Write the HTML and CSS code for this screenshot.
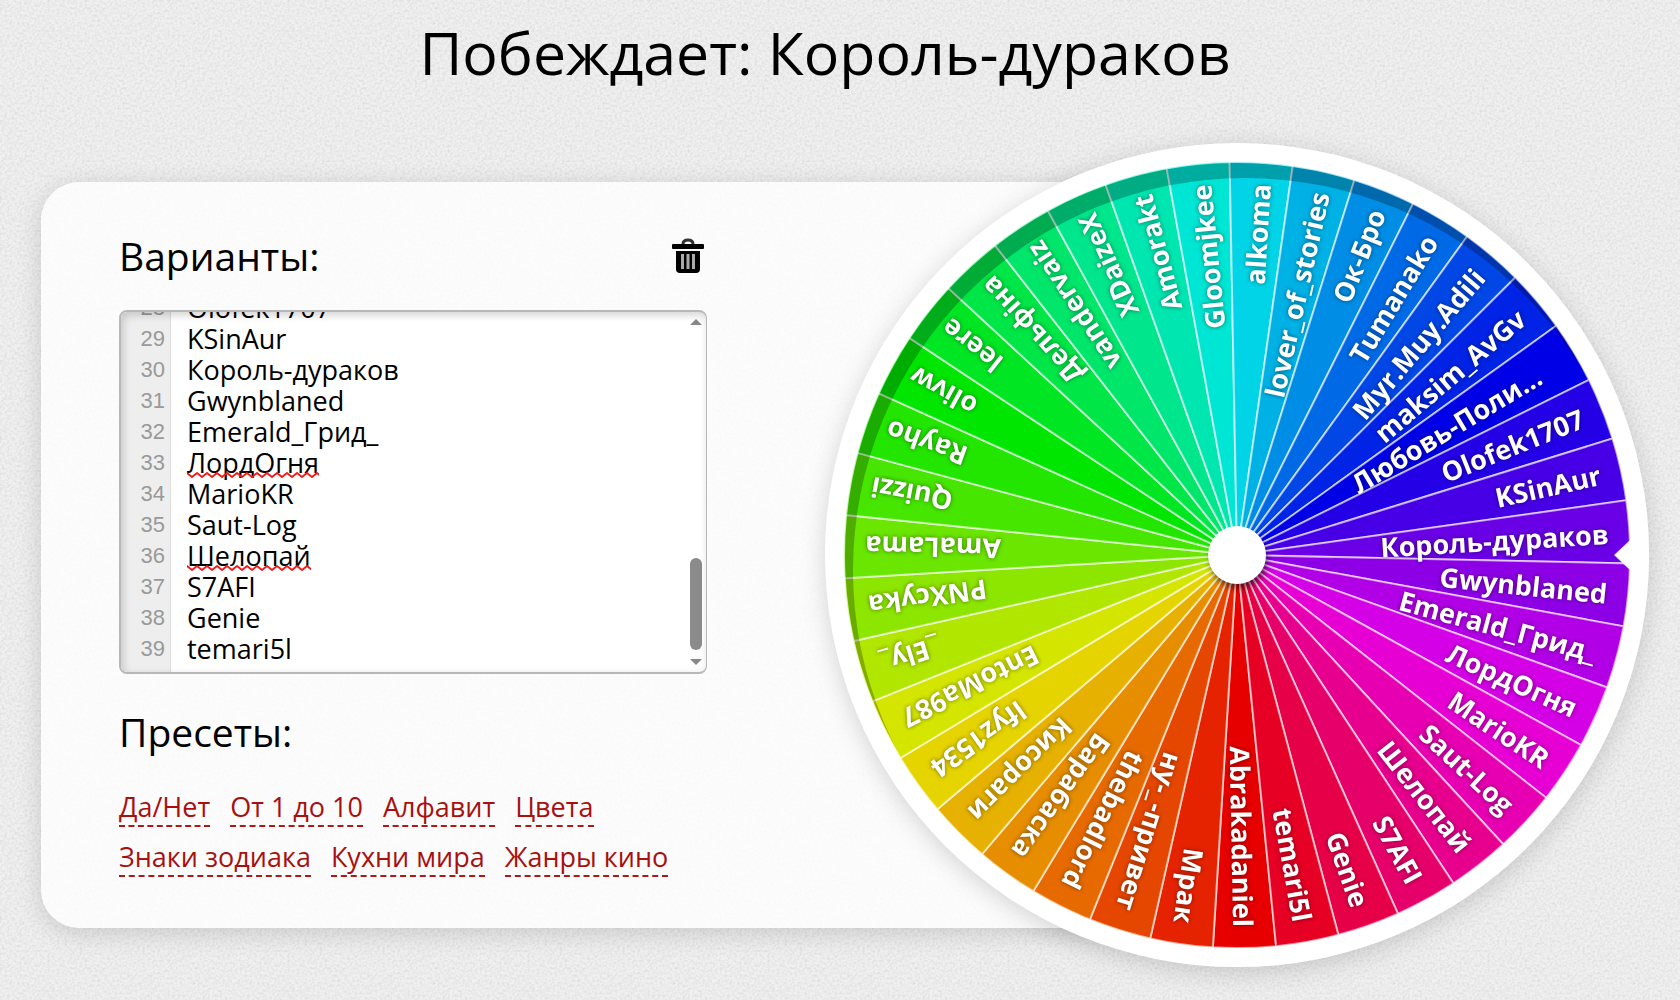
FILE: index.html
```
<!DOCTYPE html>
<html lang="ru">
<head>
    <meta charset="UTF-8">
    <meta name="viewport" content="width=device-width, initial-scale=1.0">
    <title>Колесо фортуны</title>
    <link rel="stylesheet" href="styles.css">
</head>
<body>
    <h1>Побеждает: Король-дураков</h1>

    <main class="stage">
        <section class="panel">
            <div class="panel-content">
                <div class="panel-head">
                    <label class="panel-title" for="options">Варианты:</label>
                    <button class="clear-button" type="button" id="clear" aria-label="Очистить">
                        <svg viewBox="0 0 32 36" width="32" height="36">
                            <path d="M11 6 Q11 2 16 2 Q21 2 21 6" fill="none" stroke="#333" stroke-width="3"/>
                            <rect x="0" y="6" width="32" height="5" rx="1" fill="#000"/>
                            <path d="M4 13 H28 V31 Q28 35 24 35 H8 Q4 35 4 31 Z" fill="#000"/>
                            <path d="M10.5 16 V31 M16 16 V31 M21.5 16 V31" stroke="#aaa" stroke-width="3"/>
                        </svg>
                    </button>
                </div>

                <div class="editor">
                    <div class="gutter" id="gutter"></div>
                    <div class="editor-text">
                        <textarea id="options" spellcheck="false" wrap="off">Abrakadaniel
Мрак
ну-_-привет
thebadlord
Барабаска
Кисораги
lfyz1534
EntoMa987
_Ely_
PNXcyka
AmaLama
Quizzi
Rayho
olivw
leere
Дельфіна
vandervaiz
XDaizeX
Amorakt
Gloomjkee
alkoma
lover_of_stories
Ок-Бро
Tumanako
Myr.Muy.Adili
maksim_AvGv
Любовь-Поли...
Olofek1707
KSinAur
Король-дураков
Gwynblaned
Emerald_Грид_
ЛордОгня
MarioKR
Saut-Log
Шелопай
S7AFI
Genie
temari5l</textarea>
                        <div class="marks" id="marks"></div>
                    </div>
                    <div class="scrollbar">
                        <span class="arrow-up"></span>
                        <span class="thumb"></span>
                        <span class="arrow-down"></span>
                    </div>
                </div>

                <h2 class="panel-title">Пресеты:</h2>
                <nav class="presets">
                    <a href="#">Да/Нет</a>
                    <a href="#">От 1 до 10</a>
                    <a href="#">Алфавит</a>
                    <a href="#">Цвета</a>
                    <a href="#">Знаки зодиака</a>
                    <a href="#">Кухни мира</a>
                    <a href="#">Жанры кино</a>
                </nav>
            </div>
        </section>

        <svg class="wheel" viewBox="-412 -412 824 824">
            <defs>
                <clipPath id="disc"><circle r="392"/></clipPath>
            </defs>
            <circle class="rim" r="412"/>
            <g id="slices"></g>
            <path class="rim-shade" clip-path="url(#disc)" fill-rule="evenodd"
                d="M-420 -420 H420 V420 H-420 Z M-384 15 a392 392 0 1 0 784 0 a392 392 0 1 0 -784 0 Z"/>
            <g class="names" id="names"></g>
            <path class="pointer" d="M377 0 L394 -16 H400 V16 H394 Z"/>
            <circle class="hub" r="29"/>
        </svg>
    </main>

    <script src="script.js"></script>
</body>
</html>
```
FILE: styles.css
```
* {
    box-sizing: border-box;
}
body {
    margin: 0;
    font-family: "Open Sans", "Noto Sans", sans-serif;
    color: #000;
    background-color: #f0f0f0;
    background-image: url("data:image/svg+xml,%3Csvg xmlns='http://www.w3.org/2000/svg' width='240' height='240'%3E%3Cfilter id='n'%3E%3CfeTurbulence type='fractalNoise' baseFrequency='.4' numOctaves='2' stitchTiles='stitch'/%3E%3CfeColorMatrix values='0 0 0 0 0 0 0 0 0 0 0 0 0 0 0 .16 0 0 0 -.06'/%3E%3C/filter%3E%3Crect width='240' height='240' filter='url(%23n)'/%3E%3C/svg%3E");
}
h1 {
    margin: 0;
    padding: 12px 30px 51px 0;
    font-size: 59px;
    line-height: 80px;
    font-weight: normal;
    text-align: center;
}
.stage {
    display: grid;
    grid-template-columns: 39fr 41fr;
    align-items: center;
    padding: 0 31px 32px 41px;
}
.panel {
    grid-column: 1 / 3;
    grid-row: 1;
    margin-right: 25%;
    padding: 46px 78px 51px;
    border-radius: 38px;
    background: rgba(255, 255, 255, 0.8);
    box-shadow: 0 5px 25px rgba(0, 0, 0, 0.15);
}
.panel-content {
    max-width: 588px;
}
.panel-head {
    display: flex;
    justify-content: space-between;
    align-items: center;
    padding-right: 3px;
    margin-bottom: 26px;
}
.panel-title {
    margin: 0;
    font-size: 39px;
    line-height: 56px;
    font-weight: normal;
}
.clear-button {
    display: flex;
    padding: 0;
    border: none;
    background: none;
    cursor: pointer;
}

/* options editor */
.editor {
    display: flex;
    height: 364px;
    margin-bottom: 30px;
    border: 2px solid #b8b8b8;
    border-right-width: 1px;
    border-radius: 8px;
    background: #fff;
    overflow: hidden;
    position: relative;
}
.editor::after {
    content: "";
    position: absolute;
    inset: 0;
    border-radius: 6px;
    box-shadow: inset 2px 3px 8px rgba(0, 0, 0, 0.18);
    pointer-events: none;
}
.gutter {
    flex: 0 0 50px;
    padding: 8px 5px 8px 0;
    border-right: 1px solid #ddd;
    background: #eee;
    color: #999;
    font-family: "Liberation Sans", Arial, sans-serif;
    font-size: 22px;
    line-height: 31px;
    text-align: right;
    overflow: hidden;
}
.editor-text {
    flex: 1;
    position: relative;
    overflow: hidden;
}
.editor textarea {
    display: block;
    width: 100%;
    height: 100%;
    padding: 8px 16px;
    border: none;
    outline: none;
    resize: none;
    background: transparent;
    color: #000;
    font-family: inherit;
    font-size: 27px;
    line-height: 31px;
    scrollbar-width: none;
}
.marks {
    position: absolute;
    inset: 0;
    padding: 8px 16px;
    overflow: hidden;
    pointer-events: none;
}
.mark-row {
    display: flex;
    align-items: flex-end;
    height: 31px;
}
.mark {
    height: 6px;
    background: url("data:image/svg+xml,%3Csvg xmlns='http://www.w3.org/2000/svg' width='10' height='6'%3E%3Cpath d='M-1 0 L0 1 L5 5 L10 1 L11 0' fill='none' stroke='%23f01818' stroke-width='1.8'/%3E%3C/svg%3E") repeat-x;
}
.scrollbar {
    flex: 0 0 19px;
    display: flex;
    flex-direction: column;
    align-items: center;
    padding: 7px 2px 7px 0;
}
.arrow-up,
.arrow-down {
    border: 6px solid transparent;
}
.arrow-up {
    border-top-width: 0;
    border-bottom-color: #888;
}
.arrow-down {
    border-bottom-width: 0;
    border-top-color: #888;
}
.thumb {
    width: 12px;
    height: 92px;
    margin: auto 0 9px;
    border-radius: 6px;
    background: #8b8b8b;
}

.presets {
    display: flex;
    flex-wrap: wrap;
    gap: 12px 20px;
    margin-top: 29px;
}
.presets a {
    border-bottom: 2px dashed #b01818;
    color: #a81010;
    font-size: 27px;
    line-height: 36px;
    text-decoration: none;
}

/* wheel */
.wheel {
    grid-column: 2;
    grid-row: 1;
    display: block;
    width: 100%;
    overflow: visible;
    filter: drop-shadow(0 5px 12px rgba(0, 0, 0, 0.16));
}
.rim,
.pointer,
.hub {
    fill: #fff;
}
.hub {
    filter: drop-shadow(2px 5px 3px rgba(0, 0, 0, 0.5));
}
.slice {
    stroke: rgba(255, 255, 255, 0.6);
    stroke-width: 2px;
}
.rim-shade {
    fill: rgba(0, 0, 0, 0.25);
}
.names {
    filter: drop-shadow(0 0 2px rgba(0, 0, 0, 0.5));
}
.names text {
    fill: #fff;
    font-size: 27px;
    font-weight: bold;
    text-anchor: end;
}
```
FILE: script.js
```
const options = document.getElementById('options');
const gutter = document.getElementById('gutter');
const marks = document.getElementById('marks');
const slices = document.getElementById('slices');
const names = document.getElementById('names');

const SVG = 'http://www.w3.org/2000/svg';
const RADIUS = 393;
const START = 84.3;
const misspelled = ['ЛордОгня', 'Шелопай'];

function point(angle, r) {
    const a = angle * Math.PI / 180;
    return (r * Math.cos(a)).toFixed(2) + ' ' + (r * Math.sin(a)).toFixed(2);
}

function drawWheel(list) {
    const step = 360 / list.length;
    slices.innerHTML = '';
    names.innerHTML = '';
    list.forEach((name, i) => {
        const from = START + i * step;
        const path = document.createElementNS(SVG, 'path');
        path.setAttribute('class', 'slice');
        path.setAttribute('d', `M0 0 L${point(from, RADIUS)} A${RADIUS} ${RADIUS} 0 0 1 ${point(from + step, RADIUS)} Z`);
        path.setAttribute('fill', `hsl(${360 * i / list.length}, 100%, 45%)`);
        slices.appendChild(path);

        // shortened names end a little closer to the hub
        const text = document.createElementNS(SVG, 'text');
        text.setAttribute('x', name.endsWith('...') ? 352 : 372);
        text.setAttribute('y', 11);
        text.setAttribute('transform', `rotate(${from + step / 2})`);
        text.textContent = name;
        names.appendChild(text);
    });
}

function drawEditor(list) {
    const ctx = document.createElement('canvas').getContext('2d');
    ctx.font = getComputedStyle(options).font;
    gutter.innerHTML = list.map((name, i) => `<div>${i + 1}</div>`).join('');
    marks.innerHTML = list.map(name => {
        const width = misspelled.includes(name) ? Math.round(ctx.measureText(name).width) : 0;
        return `<div class="mark-row"><span class="mark" style="width: ${width}px"></span></div>`;
    }).join('');
}

function syncScroll() {
    gutter.scrollTop = options.scrollTop;
    marks.scrollTop = options.scrollTop;
}

function update() {
    const list = options.value.split('\n').filter(line => line.trim());
    drawWheel(list);
    drawEditor(list);
    syncScroll();
}

options.addEventListener('input', update);
options.addEventListener('scroll', syncScroll);
document.getElementById('clear').addEventListener('click', () => {
    options.value = '';
    update();
});

update();
options.scrollTop = options.scrollHeight;
syncScroll();
```
